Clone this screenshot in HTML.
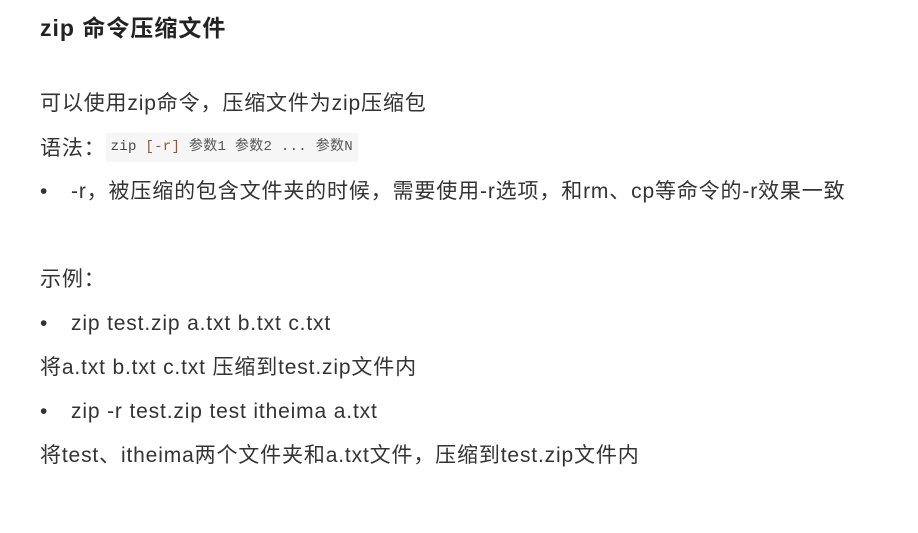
<!DOCTYPE html>
<html><head><meta charset="utf-8"><style>
body{margin:0;width:918px;height:533px;background:#fff;color:#333;font-family:"Liberation Sans","Noto Sans CJK SC",sans-serif;position:relative;overflow:hidden}
.l{position:absolute;left:40px;font-size:21px;line-height:28px;white-space:nowrap;letter-spacing:0.85px}
h1{position:absolute;left:40px;top:13px;margin:0;font-size:23px;line-height:30px;font-weight:bold;color:#222;letter-spacing:1px}
.code{display:inline-block;background:#f6f6f6;font-family:"Liberation Mono","Noto Sans CJK SC",monospace;font-size:14px;line-height:29px;padding:0 5px;vertical-align:middle;color:#555;position:relative;top:-2px;letter-spacing:0.3px}
.b{display:inline-block;width:31px}
</style></head><body>
<h1>zip 命令压缩文件</h1>
<div class="l" style="top:90px">可以使用zip命令，压缩文件为zip压缩包</div>
<div class="l" style="top:135px">语法：<span class="code"><span style="color:#444">zip</span> <span style="color:#a0522d">[-r]</span> 参数1 参数2 ... 参数N</span></div>
<div class="l" style="top:178px"><span class="b">•</span>-r，被压缩的包含文件夹的时候，需要使用-r选项，和rm、cp等命令的-r效果一致</div>
<div class="l" style="top:266px">示例：</div>
<div class="l" style="top:310px"><span class="b">•</span>zip test.zip a.txt b.txt c.txt</div>
<div class="l" style="top:354px">将a.txt b.txt c.txt 压缩到test.zip文件内</div>
<div class="l" style="top:398px"><span class="b">•</span>zip -r test.zip test itheima a.txt</div>
<div class="l" style="top:442px">将test、itheima两个文件夹和a.txt文件，压缩到test.zip文件内</div>
</body></html>
